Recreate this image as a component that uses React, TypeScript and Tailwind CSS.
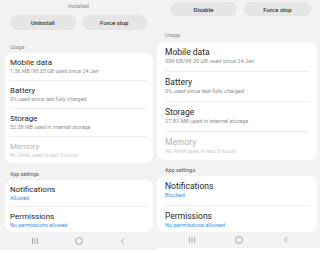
import React from 'react';

type RowProps = {
  title: string;
  sub: string;
  h: string;
  titleCls: string;
  subCls: string;
  divider?: boolean;
  muted?: boolean;
  blue?: boolean;
};

const Row: React.FC<RowProps> = ({ title, sub, h, titleCls, subCls, divider, muted, blue }) => (
  <div className={`${h} flex flex-col pt-[5px] ${divider ? 'border-b border-[#ededed]' : ''}`}>
    <div className={`${titleCls} ${muted ? 'text-[#b3b3b3]' : 'text-[#1e1e1e]'} whitespace-nowrap`}>{title}</div>
    <div
      className={`${subCls} ${muted ? 'text-[#c9c9c9]' : blue ? 'text-[#3b8ed8]' : 'text-[#8e8e8e]'} whitespace-nowrap`}
    >
      {sub}
    </div>
  </div>
);

const NavBar: React.FC<{ h: string; gap: string }> = ({ h, gap }) => (
  <div className={`${h} flex items-center justify-center ${gap}`}>
    <svg width="8" height="8" viewBox="0 0 8 8" className="shrink-0">
      <path d="M1.5 1v6M4 1v6M6.5 1v6" stroke="#9a9a9a" strokeWidth="0.9" />
    </svg>
    <svg width="8" height="8" viewBox="0 0 8 8" className="shrink-0">
      <rect x="0.8" y="0.8" width="6.4" height="6.4" rx="2.6" fill="none" stroke="#9a9a9a" strokeWidth="0.9" />
    </svg>
    <svg width="8" height="8" viewBox="0 0 8 8" className="shrink-0">
      <path d="M5 1.2L2.6 4L5 6.8" fill="none" stroke="#9a9a9a" strokeWidth="0.9" />
    </svg>
  </div>
);

const LeftPanel: React.FC = () => {
  const t = 'text-[8px] leading-[10px]';
  const s = 'text-[5.4px] leading-[7px]';
  return (
    <div className="w-[157px] h-[250px] bg-[#f2f2f2] flex flex-col overflow-hidden">
      <div className="pt-[2px] h-[10px] text-center text-[5.5px] leading-[8px] text-[#8a8a8a]">Installed</div>
      <div className="mt-[5px] px-[10px] flex gap-[6px]">
        <div className="flex-1 h-[15px] rounded-full bg-[#e5e5e5] flex items-center justify-center text-[6px] font-medium text-[#333]">
          Uninstall
        </div>
        <div className="flex-1 h-[15px] rounded-full bg-[#e5e5e5] flex items-center justify-center text-[6px] font-medium text-[#333]">
          Force stop
        </div>
      </div>
      <div className="mt-[13px] pl-[10px] h-[8px] text-[5.2px] leading-[8px] text-[#8a8a8a]">Usage</div>
      <div className="mt-[2px] ml-[5px] mr-[4px] bg-white rounded-[8px] px-[5px]">
        <Row h="h-[28px]" title="Mobile data" sub="1.36 MB/98.35 GB used since 24 Jan" titleCls={t} subCls={s} divider />
        <Row h="h-[28px]" title="Battery" sub="0% used since last fully charged" titleCls={t} subCls={s} divider />
        <Row h="h-[28px]" title="Storage" sub="52.58 MB used in internal storage" titleCls={t} subCls={s} divider />
        <Row h="h-[26px]" title="Memory" sub="No RAM used in last 3 hours" titleCls={t} subCls={s} muted />
      </div>
      <div className="mt-[7px] pl-[10px] h-[8px] text-[5.2px] leading-[8px] text-[#555]">App settings</div>
      <div className="mt-[2px] ml-[5px] mr-[4px] bg-white rounded-[8px] px-[5px]">
        <Row h="h-[27px]" title="Notifications" sub="Allowed" titleCls={t} subCls={s} divider blue />
        <Row h="h-[25px]" title="Permissions" sub="No permissions allowed" titleCls={t} subCls={s} blue />
      </div>
      <NavBar h="h-[18px]" gap="gap-[36px]" />
    </div>
  );
};

const RightPanel: React.FC = () => {
  const t = 'text-[8.5px] leading-[10px]';
  const s = 'text-[5.6px] leading-[8px]';
  return (
    <div className="w-[163px] h-[248px] bg-[#f2f2f2] flex flex-col overflow-hidden">
      <div className="pt-[2px] pl-[13px] pr-[9px] flex gap-[7px]">
        <div className="flex-1 h-[14px] rounded-full bg-[#e5e5e5] flex items-center justify-center text-[6px] font-medium text-[#333]">
          Disable
        </div>
        <div className="flex-1 h-[14px] rounded-full bg-[#e5e5e5] flex items-center justify-center text-[6px] font-medium text-[#333]">
          Force stop
        </div>
      </div>
      <div className="mt-[15px] pl-[8px] h-[8px] text-[5.4px] leading-[8px] text-[#8a8a8a]">Usage</div>
      <div className="mt-[3px] mr-[3px] bg-white rounded-[8px] px-[8px]">
        <Row h="h-[30px]" title="Mobile data" sub="509 KB/98.35 GB used since 24 Jan" titleCls={t} subCls={s} divider />
        <Row h="h-[30px]" title="Battery" sub="0% used since last fully charged" titleCls={t} subCls={s} divider />
        <Row h="h-[30px]" title="Storage" sub="27.83 MB used in internal storage" titleCls={t} subCls={s} divider />
        <Row h="h-[28px]" title="Memory" sub="No RAM used in last 3 hours" titleCls={t} subCls={s} muted />
      </div>
      <div className="mt-[6px] pl-[8px] h-[8px] text-[5.4px] leading-[8px] text-[#555]">App settings</div>
      <div className="mt-[2px] mr-[3px] bg-white rounded-[8px] px-[8px]">
        <Row h="h-[30px]" title="Notifications" sub="Blocked" titleCls={t} subCls={s} divider blue />
        <Row h="h-[26px]" title="Permissions" sub="No permissions allowed" titleCls={t} subCls={s} blue />
      </div>
      <NavBar h="h-[16px]" gap="gap-[39px]" />
    </div>
  );
};

export default function App() {
  return (
    <div className="w-[320px] h-[253px] bg-white flex items-start overflow-hidden font-['Roboto','Liberation_Sans',sans-serif]">
      <LeftPanel />
      <RightPanel />
    </div>
  );
}
